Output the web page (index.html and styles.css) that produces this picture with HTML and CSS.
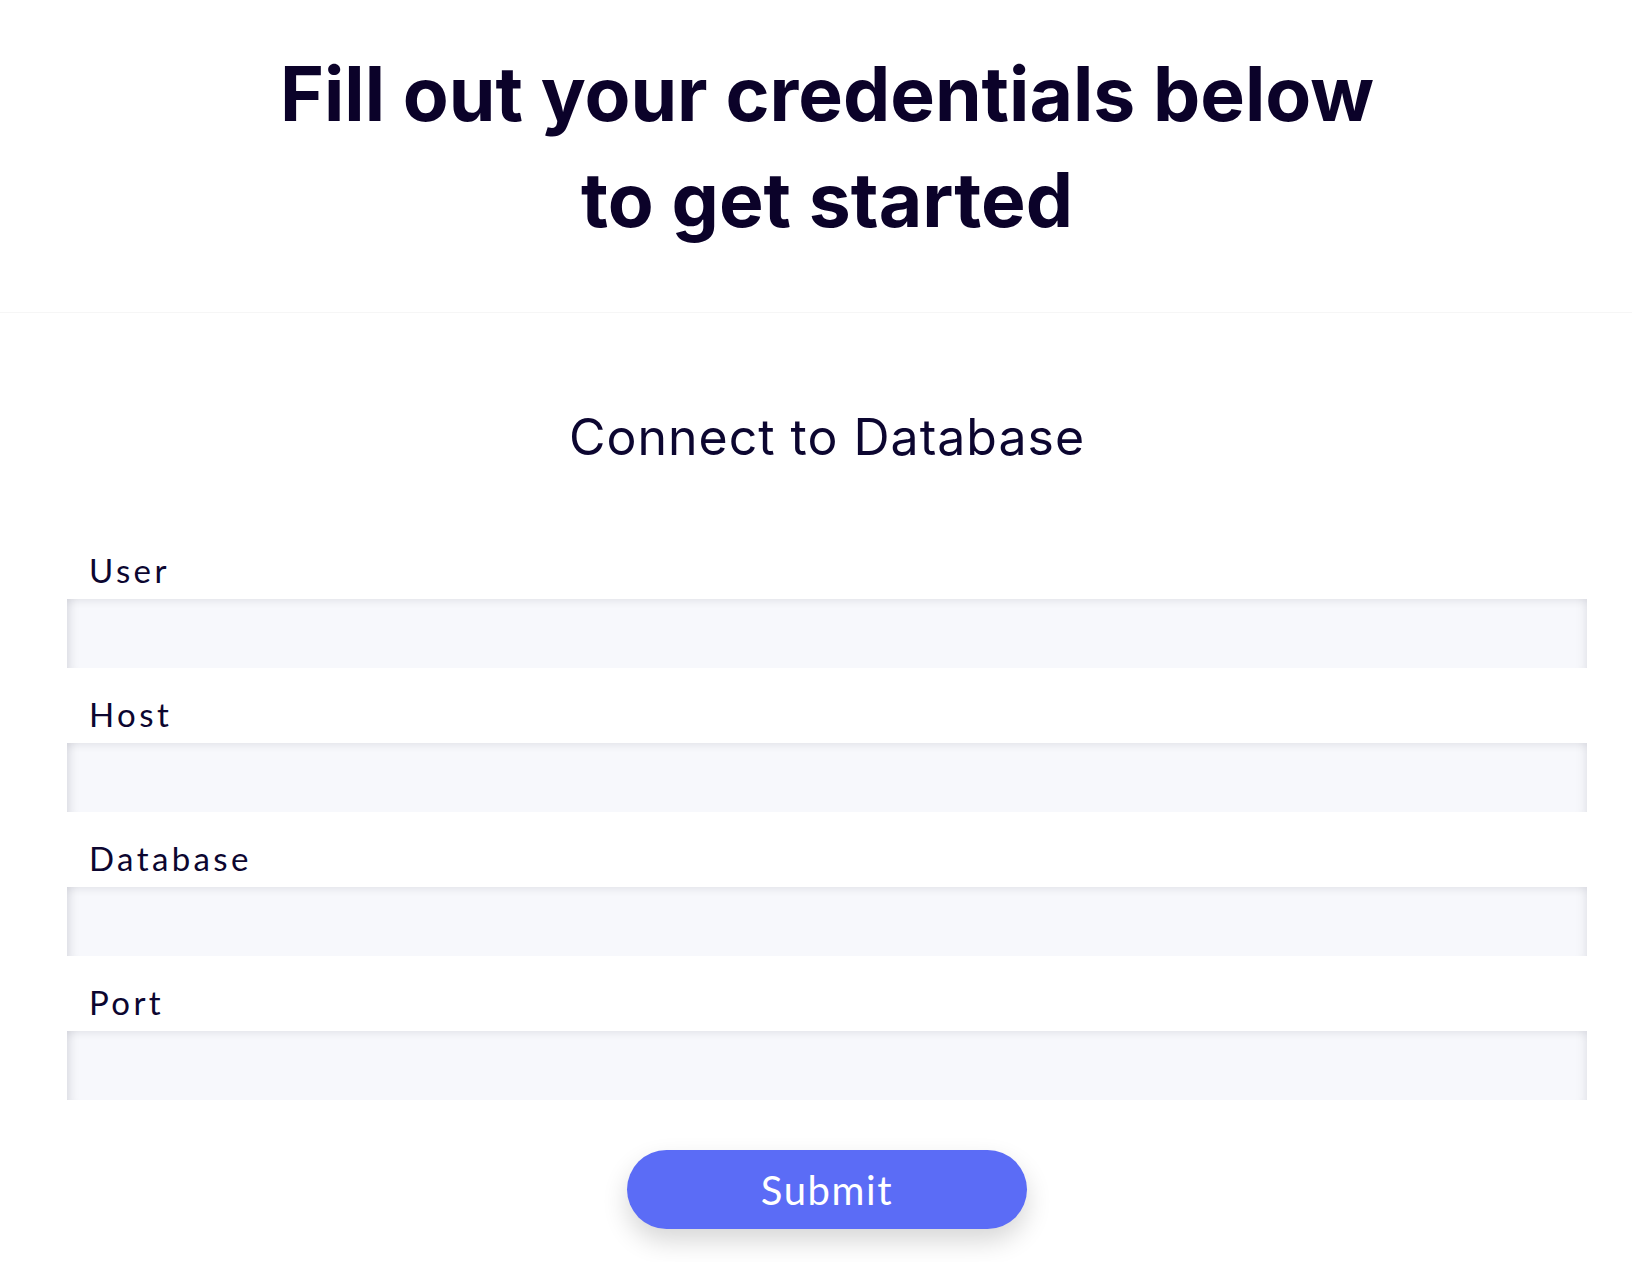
FILE: index.html
```html
<!DOCTYPE html>
<html lang="en">
<head>
<meta charset="utf-8">
<title>Connect to Database</title>
<link rel="stylesheet" href="styles.css">
</head>
<body>
<div class="page">
  <header class="hero">
    <h1 class="hero-title">Fill out your credentials below<br>to get started</h1>
  </header>
  <section class="panel">
    <h2 class="panel-title">Connect to Database</h2>
    <form class="form">
      <div class="field">
        <label class="field-label" for="user">User</label>
        <input class="field-input" id="user" type="text">
      </div>
      <div class="field">
        <label class="field-label" for="host">Host</label>
        <input class="field-input" id="host" type="text">
      </div>
      <div class="field">
        <label class="field-label" for="database">Database</label>
        <input class="field-input" id="database" type="text">
      </div>
      <div class="field">
        <label class="field-label" for="port">Port</label>
        <input class="field-input" id="port" type="text">
      </div>
      <div class="actions">
        <button class="submit" type="button">Submit</button>
      </div>
    </form>
  </section>
</div>
</body>
</html>
```
FILE: styles.css
```css
* { box-sizing: border-box; }
html, body { margin: 0; padding: 0; background: #ffffff; }
body { font-family: "Lato", "Noto Sans", sans-serif; color: #0c0630; min-height: 1262px; }

.page {
  margin-left: 22px;
  width: 1610px;
}

.hero {
  padding-top: 41px;
  padding-bottom: 59px;
}

.hero-title {
  margin: 0;
  text-align: center;
  font-family: "Inter", "Noto Sans", sans-serif;
  font-weight: 700;
  font-size: 75px;
  line-height: 106px;
  letter-spacing: 0;
  color: #0b0229;
}

.panel {
  margin-left: -22px;
  padding-left: 22px;
  border-top: 1px solid #f6f6f6;
  padding-top: 94px;
}

.panel-title {
  margin: 0;
  text-align: center;
  font-family: "Inter", "Noto Sans", sans-serif;
  font-weight: 400;
  font-size: 50px;
  line-height: 60px;
  letter-spacing: 1px;
  color: #0c0630;
}

.form {
  padding: 87px 45px 0;
  display: flex;
  flex-direction: column;
  gap: 30px;
}

.field {
  display: flex;
  flex-direction: column;
  gap: 13px;
}

.field-label {
  display: block;
  padding-left: 22px;
  font-size: 33px;
  line-height: 32px;
  letter-spacing: 3.4px;
  color: #0c0630;
}

.field-input {
  display: block;
  width: 100%;
  height: 69px;
  border: 0;
  border-radius: 0;
  outline: none;
  background: #f7f8fc;
  box-shadow: inset 0 5px 9px -3px rgba(0, 0, 30, 0.09), inset 12px 0 10px -8px rgba(0, 0, 30, 0.09), inset -12px 0 10px -8px rgba(0, 0, 30, 0.05);
  font: inherit;
  font-size: 24px;
  padding: 0 22px;
}

.actions {
  display: flex;
  justify-content: center;
  padding-top: 20px;
}

.submit {
  width: 400px;
  height: 79px;
  border: 0;
  border-radius: 40px;
  background: #5b6cf6;
  color: #ffffff;
  font-family: "Lato", "Noto Sans", sans-serif;
  font-size: 40px;
  letter-spacing: 1.6px;
  cursor: pointer;
  box-shadow: 0 12px 26px rgba(0, 0, 0, 0.16);
}
```
